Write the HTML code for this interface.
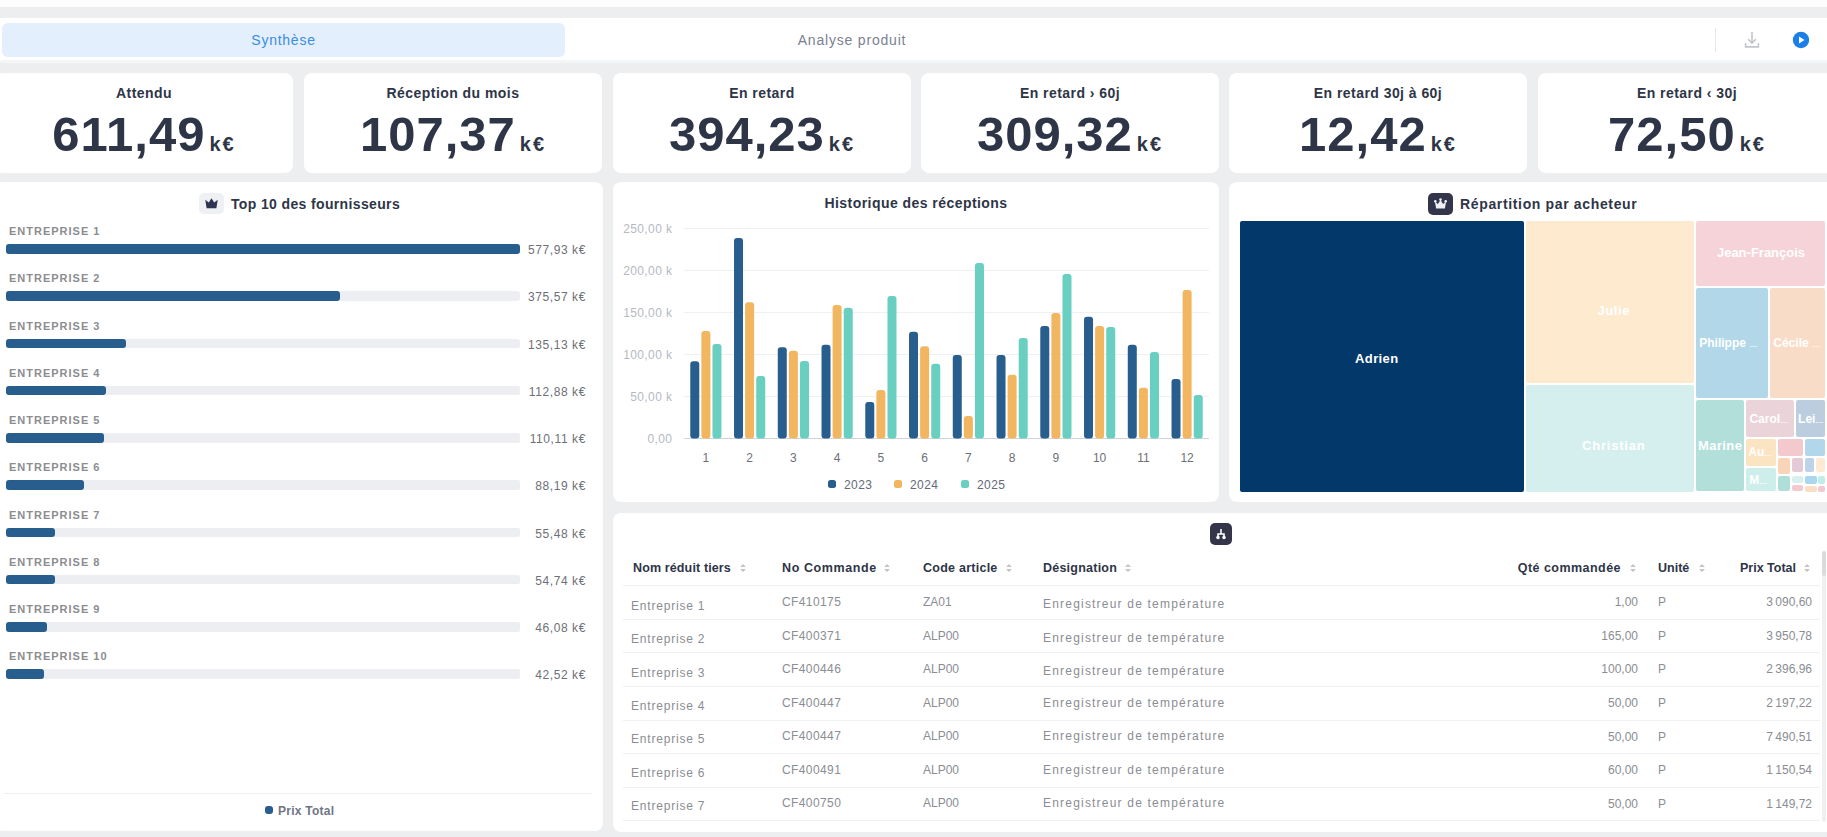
<!DOCTYPE html><html><head><meta charset="utf-8"><style>
*{box-sizing:border-box;margin:0;padding:0}
html,body{width:1827px;height:837px;overflow:hidden;background:#edeef0;font-family:"Liberation Sans", sans-serif;}
.a{position:absolute}
.card{position:absolute;background:#fff;border-radius:8px}
.t{position:absolute;white-space:nowrap;line-height:1}
.kl{font-size:14px;font-weight:bold;color:#2e3547;letter-spacing:0.45px}
.kv{font-size:49px;font-weight:bold;color:#2e3547;letter-spacing:1px}
.ku{font-size:20px;letter-spacing:2px;margin-left:4px}
.el{font-size:11px;font-weight:bold;color:#8c8d90;letter-spacing:1px}
.ev{font-size:12px;color:#6d7076;text-align:right;width:100px;letter-spacing:0.6px}
.yl{font-size:12px;color:#b5b9bf;text-align:right;width:60.4px;letter-spacing:0.4px}
.ml{font-size:12px;color:#6c7079;text-align:center;width:30px}
.lg{font-size:12px;color:#636a7a;letter-spacing:0.4px}
.tm{position:absolute;border-radius:3px}
.tl{position:absolute;white-space:nowrap;line-height:1;color:#fff;font-weight:bold;font-size:13px;text-align:center;letter-spacing:0.4px}
.th{font-size:12.5px;font-weight:bold;color:#2e3547}
.td{font-size:12px;color:#8a8d92}
.row{position:absolute;height:1px;background:#eef0f2}
</style></head><body>
<div class="a" style="left:0;top:0;width:1827px;height:7px;background:#fdfdfd"></div><div class="a" style="left:0;top:18px;width:1827px;height:45px;background:#fff"></div><div class="a" style="left:0;top:60px;width:1827px;height:2.5px;background:#f4f5f7"></div><div class="a" style="left:2px;top:23px;width:563px;height:33.5px;background:#e3effc;border-radius:6px"></div><div class="t" style="left:0;width:567px;text-align:center;top:33px;font-size:14px;letter-spacing:0.75px;color:#3a8de0">Synthèse</div><div class="t" style="left:567px;width:570px;text-align:center;top:33px;font-size:14px;letter-spacing:0.8px;color:#7b8190">Analyse produit</div><div class="a" style="left:1715px;top:28px;width:1px;height:24px;background:#e6e8ec"></div><svg class="a" style="left:1743px;top:31px" width="18" height="18" viewBox="0 0 18 18"><path d="M9 1v11M5.2 8.2l3.8 3.8 3.8-3.8" stroke="#c2c5cb" stroke-width="1.6" fill="none"/><path d="M2.6 12v3.9h12.8v-3.9" stroke="#c2c5cb" stroke-width="1.6" fill="none"/></svg><svg class="a" style="left:1792px;top:31px" width="18" height="18" viewBox="0 0 18 18"><circle cx="9" cy="9" r="8.2" fill="#1a7fe6"/><path d="M7 5.5v7l5.5-3.5z" fill="#fff"/></svg><div class="card" style="left:-5px;top:73px;width:298px;height:100px"></div><div class="t kl" style="left:-5px;width:298px;text-align:center;top:86px">Attendu</div><div class="t kv" style="left:-5px;width:298px;text-align:center;top:110px">611,49<span class="ku">k€</span></div><div class="card" style="left:304px;top:73px;width:298px;height:100px"></div><div class="t kl" style="left:304px;width:298px;text-align:center;top:86px">Réception du mois</div><div class="t kv" style="left:304px;width:298px;text-align:center;top:110px">107,37<span class="ku">k€</span></div><div class="card" style="left:613px;top:73px;width:298px;height:100px"></div><div class="t kl" style="left:613px;width:298px;text-align:center;top:86px">En retard</div><div class="t kv" style="left:613px;width:298px;text-align:center;top:110px">394,23<span class="ku">k€</span></div><div class="card" style="left:921px;top:73px;width:298px;height:100px"></div><div class="t kl" style="left:921px;width:298px;text-align:center;top:86px">En retard › 60j</div><div class="t kv" style="left:921px;width:298px;text-align:center;top:110px">309,32<span class="ku">k€</span></div><div class="card" style="left:1229px;top:73px;width:298px;height:100px"></div><div class="t kl" style="left:1229px;width:298px;text-align:center;top:86px">En retard 30j à 60j</div><div class="t kv" style="left:1229px;width:298px;text-align:center;top:110px">12,42<span class="ku">k€</span></div><div class="card" style="left:1538px;top:73px;width:298px;height:100px"></div><div class="t kl" style="left:1538px;width:298px;text-align:center;top:86px">En retard ‹ 30j</div><div class="t kv" style="left:1538px;width:298px;text-align:center;top:110px">72,50<span class="ku">k€</span></div><div class="card" style="left:-5px;top:182px;width:608px;height:649px"></div><div class="card" style="left:613px;top:182px;width:606px;height:320px"></div><div class="card" style="left:1229px;top:182px;width:607px;height:320px"></div><div class="card" style="left:613px;top:513px;width:1223px;height:319px"></div><div class="a" style="left:199px;top:193px;width:25px;height:21px;background:#eef0f4;border-radius:5px"></div><svg class="a" style="left:205px;top:198px" width="13" height="11" viewBox="0 0 13 11" fill="#2d3350"><path d="M0.3 1.8L3.8 4.4 6.5 0.3 9.2 4.4 12.7 1.8 11.4 10.3H1.6z"/></svg><div class="t" style="left:231px;top:197px;font-size:14px;letter-spacing:0.36px;font-weight:bold;color:#2e3547">Top 10 des fournisseurs</div><div class="t el" style="left:9px;top:226.00px">ENTREPRISE 1</div><div class="a" style="left:6px;top:244.00px;width:514px;height:9.5px;background:#eceef1;border-radius:2px"></div><div class="a" style="left:6px;top:244.00px;width:514px;height:9.5px;background:#275e8e;border-radius:3px"></div><div class="t ev" style="left:486px;top:244.00px">577,93 k€</div><div class="t el" style="left:9px;top:273.25px">ENTREPRISE 2</div><div class="a" style="left:6px;top:291.25px;width:514px;height:9.5px;background:#eceef1;border-radius:2px"></div><div class="a" style="left:6px;top:291.25px;width:334px;height:9.5px;background:#275e8e;border-radius:3px"></div><div class="t ev" style="left:486px;top:291.25px">375,57 k€</div><div class="t el" style="left:9px;top:320.50px">ENTREPRISE 3</div><div class="a" style="left:6px;top:338.50px;width:514px;height:9.5px;background:#eceef1;border-radius:2px"></div><div class="a" style="left:6px;top:338.50px;width:120px;height:9.5px;background:#275e8e;border-radius:3px"></div><div class="t ev" style="left:486px;top:338.50px">135,13 k€</div><div class="t el" style="left:9px;top:367.75px">ENTREPRISE 4</div><div class="a" style="left:6px;top:385.75px;width:514px;height:9.5px;background:#eceef1;border-radius:2px"></div><div class="a" style="left:6px;top:385.75px;width:100px;height:9.5px;background:#275e8e;border-radius:3px"></div><div class="t ev" style="left:486px;top:385.75px">112,88 k€</div><div class="t el" style="left:9px;top:415.00px">ENTREPRISE 5</div><div class="a" style="left:6px;top:433.00px;width:514px;height:9.5px;background:#eceef1;border-radius:2px"></div><div class="a" style="left:6px;top:433.00px;width:98px;height:9.5px;background:#275e8e;border-radius:3px"></div><div class="t ev" style="left:486px;top:433.00px">110,11 k€</div><div class="t el" style="left:9px;top:462.25px">ENTREPRISE 6</div><div class="a" style="left:6px;top:480.25px;width:514px;height:9.5px;background:#eceef1;border-radius:2px"></div><div class="a" style="left:6px;top:480.25px;width:78px;height:9.5px;background:#275e8e;border-radius:3px"></div><div class="t ev" style="left:486px;top:480.25px">88,19 k€</div><div class="t el" style="left:9px;top:509.50px">ENTREPRISE 7</div><div class="a" style="left:6px;top:527.50px;width:514px;height:9.5px;background:#eceef1;border-radius:2px"></div><div class="a" style="left:6px;top:527.50px;width:49px;height:9.5px;background:#275e8e;border-radius:3px"></div><div class="t ev" style="left:486px;top:527.50px">55,48 k€</div><div class="t el" style="left:9px;top:556.75px">ENTREPRISE 8</div><div class="a" style="left:6px;top:574.75px;width:514px;height:9.5px;background:#eceef1;border-radius:2px"></div><div class="a" style="left:6px;top:574.75px;width:49px;height:9.5px;background:#275e8e;border-radius:3px"></div><div class="t ev" style="left:486px;top:574.75px">54,74 k€</div><div class="t el" style="left:9px;top:604.00px">ENTREPRISE 9</div><div class="a" style="left:6px;top:622.00px;width:514px;height:9.5px;background:#eceef1;border-radius:2px"></div><div class="a" style="left:6px;top:622.00px;width:41px;height:9.5px;background:#275e8e;border-radius:3px"></div><div class="t ev" style="left:486px;top:622.00px">46,08 k€</div><div class="t el" style="left:9px;top:651.25px">ENTREPRISE 10</div><div class="a" style="left:6px;top:669.25px;width:514px;height:9.5px;background:#eceef1;border-radius:2px"></div><div class="a" style="left:6px;top:669.25px;width:38px;height:9.5px;background:#275e8e;border-radius:3px"></div><div class="t ev" style="left:486px;top:669.25px">42,52 k€</div><div class="a" style="left:4px;top:793px;width:588px;height:1px;background:#eceef1"></div><div class="a" style="left:265px;top:806px;width:8px;height:8px;background:#275e8e;border-radius:3px"></div><div class="t" style="left:278px;top:805px;font-size:12px;letter-spacing:0.25px;font-weight:bold;color:#6e7585">Prix Total</div><div class="t" style="left:613px;width:606px;text-align:center;top:196px;font-size:14px;letter-spacing:0.45px;font-weight:bold;color:#2e3547">Historique des réceptions</div><div class="a" style="left:684px;top:228.00px;width:525px;height:1px;background:#eef0f2"></div><div class="t yl" style="left:612px;top:223.00px">250,00 k</div><div class="a" style="left:684px;top:270.02px;width:525px;height:1px;background:#eef0f2"></div><div class="t yl" style="left:612px;top:265.02px">200,00 k</div><div class="a" style="left:684px;top:312.04px;width:525px;height:1px;background:#eef0f2"></div><div class="t yl" style="left:612px;top:307.04px">150,00 k</div><div class="a" style="left:684px;top:354.06px;width:525px;height:1px;background:#eef0f2"></div><div class="t yl" style="left:612px;top:349.06px">100,00 k</div><div class="a" style="left:684px;top:396.08px;width:525px;height:1px;background:#eef0f2"></div><div class="t yl" style="left:612px;top:391.08px">50,00 k</div><div class="a" style="left:684px;top:438.10px;width:525px;height:1px;background:#cfd2d6"></div><div class="t yl" style="left:612px;top:433.10px">0,00</div><div class="t ml" style="left:690.88px;top:452px">1</div><div class="t ml" style="left:734.62px;top:452px">2</div><div class="t ml" style="left:778.38px;top:452px">3</div><div class="t ml" style="left:822.12px;top:452px">4</div><div class="t ml" style="left:865.88px;top:452px">5</div><div class="t ml" style="left:909.62px;top:452px">6</div><div class="t ml" style="left:953.38px;top:452px">7</div><div class="t ml" style="left:997.12px;top:452px">8</div><div class="t ml" style="left:1040.88px;top:452px">9</div><div class="t ml" style="left:1084.62px;top:452px">10</div><div class="t ml" style="left:1128.38px;top:452px">11</div><div class="t ml" style="left:1172.12px;top:452px">12</div><svg class="a" style="left:0;top:0" width="1827" height="837"><rect x="690.27" y="361.37" width="9" height="77.23" rx="3" fill="#275e8e"/><rect x="701.38" y="331.03" width="9" height="107.57" rx="3" fill="#f2b660"/><rect x="712.48" y="343.97" width="9" height="94.63" rx="3" fill="#68cfc1"/><rect x="734.02" y="238.00" width="9" height="200.60" rx="3" fill="#275e8e"/><rect x="745.12" y="302.20" width="9" height="136.40" rx="3" fill="#f2b660"/><rect x="756.23" y="375.91" width="9" height="62.69" rx="3" fill="#68cfc1"/><rect x="777.77" y="347.16" width="9" height="91.44" rx="3" fill="#275e8e"/><rect x="788.88" y="350.69" width="9" height="87.91" rx="3" fill="#f2b660"/><rect x="799.98" y="361.03" width="9" height="77.57" rx="3" fill="#68cfc1"/><rect x="821.52" y="344.81" width="9" height="93.79" rx="3" fill="#275e8e"/><rect x="832.62" y="304.98" width="9" height="133.62" rx="3" fill="#f2b660"/><rect x="843.73" y="307.75" width="9" height="130.85" rx="3" fill="#68cfc1"/><rect x="865.27" y="402.04" width="9" height="36.56" rx="3" fill="#275e8e"/><rect x="876.38" y="390.02" width="9" height="48.58" rx="3" fill="#f2b660"/><rect x="887.48" y="295.90" width="9" height="142.70" rx="3" fill="#68cfc1"/><rect x="909.02" y="331.87" width="9" height="106.73" rx="3" fill="#275e8e"/><rect x="920.12" y="346.16" width="9" height="92.44" rx="3" fill="#f2b660"/><rect x="931.23" y="363.80" width="9" height="74.80" rx="3" fill="#68cfc1"/><rect x="952.77" y="354.98" width="9" height="83.62" rx="3" fill="#275e8e"/><rect x="963.88" y="415.91" width="9" height="22.69" rx="3" fill="#f2b660"/><rect x="974.98" y="262.96" width="9" height="175.64" rx="3" fill="#68cfc1"/><rect x="996.52" y="354.98" width="9" height="83.62" rx="3" fill="#275e8e"/><rect x="1007.62" y="374.73" width="9" height="63.87" rx="3" fill="#f2b660"/><rect x="1018.73" y="338.00" width="9" height="100.60" rx="3" fill="#68cfc1"/><rect x="1040.28" y="325.99" width="9" height="112.61" rx="3" fill="#275e8e"/><rect x="1051.38" y="312.96" width="9" height="125.64" rx="3" fill="#f2b660"/><rect x="1062.48" y="273.88" width="9" height="164.72" rx="3" fill="#68cfc1"/><rect x="1084.03" y="316.74" width="9" height="121.86" rx="3" fill="#275e8e"/><rect x="1095.12" y="325.99" width="9" height="112.61" rx="3" fill="#f2b660"/><rect x="1106.23" y="326.99" width="9" height="111.61" rx="3" fill="#68cfc1"/><rect x="1127.78" y="344.81" width="9" height="93.79" rx="3" fill="#275e8e"/><rect x="1138.88" y="387.84" width="9" height="50.76" rx="3" fill="#f2b660"/><rect x="1149.98" y="352.04" width="9" height="86.56" rx="3" fill="#68cfc1"/><rect x="1171.53" y="379.10" width="9" height="59.50" rx="3" fill="#275e8e"/><rect x="1182.62" y="290.02" width="9" height="148.58" rx="3" fill="#f2b660"/><rect x="1193.73" y="394.90" width="9" height="43.70" rx="3" fill="#68cfc1"/></svg><div class="a" style="left:828px;top:480px;width:8px;height:8px;background:#275e8e;border-radius:2.5px"></div><div class="t lg" style="left:844px;top:479px">2023</div><div class="a" style="left:894px;top:480px;width:8px;height:8px;background:#f2b660;border-radius:2.5px"></div><div class="t lg" style="left:910px;top:479px">2024</div><div class="a" style="left:961px;top:480px;width:8px;height:8px;background:#68cfc1;border-radius:2.5px"></div><div class="t lg" style="left:977px;top:479px">2025</div><div class="a" style="left:1428px;top:193px;width:25px;height:22px;background:#33354a;border-radius:5px"></div><svg class="a" style="left:1434px;top:198px" width="13" height="11" viewBox="0 0 13 11" fill="#eef0f6"><path d="M0.9 3.6L3.9 5.9 6.5 2 9.1 5.9 12.1 3.6 10.9 10.6H2.1z"/><circle cx="1.3" cy="3.2" r="1.3"/><circle cx="6.5" cy="1.6" r="1.3"/><circle cx="11.7" cy="3.2" r="1.3"/></svg><div class="t" style="left:1460px;top:197px;font-size:14px;letter-spacing:0.65px;font-weight:bold;color:#2e3547">Répartition par acheteur</div><div class="tm" style="left:1240px;top:220.6px;width:284.0px;height:271.2px;background:#03386a;border-radius:2px"></div><div class="tl" style="left:1316.8px;width:120px;top:352.0px;letter-spacing:0.4px">Adrien</div><div class="tm" style="left:1526.3px;top:220.6px;width:167.5px;height:162.4px;background:#fdeacf;border-radius:2px"></div><div class="tl" style="left:1553.7px;width:120px;top:303.5px;letter-spacing:0.6px">Julie</div><div class="tm" style="left:1526.3px;top:385px;width:167.5px;height:106.8px;background:#d4efed;border-radius:2px"></div><div class="tl" style="left:1553.8px;width:120px;top:438.8px;letter-spacing:0.8px">Christian</div><div class="tm" style="left:1696.2px;top:220.6px;width:128.8px;height:65.4px;background:#f5d3d8;border-radius:2px"></div><div class="tl" style="left:1701.0px;width:120px;top:246.0px;letter-spacing:0px">Jean-François</div><div class="tm" style="left:1696px;top:288px;width:72.0px;height:110.0px;background:#b2d7e9;border-radius:2px"></div><div class="tl" style="left:1668.0px;width:120px;top:336.8px;font-size:12px;letter-spacing:0">Philippe <span style="font-size:8px;letter-spacing:-0.5px">…</span></div><div class="tm" style="left:1770px;top:288px;width:55.0px;height:110.0px;background:#f9dcc7;border-radius:2px"></div><div class="tl" style="left:1736.4px;width:120px;top:336.8px;font-size:12px;letter-spacing:0">Cécile <span style="font-size:8px;letter-spacing:-0.5px">…</span></div><div class="tm" style="left:1696px;top:400.3px;width:48.0px;height:91.2px;background:#b3dfdb;border-radius:2px"></div><div class="tl" style="left:1660.2px;width:120px;top:438.8px;letter-spacing:0.4px">Marine</div><div class="tm" style="left:1746px;top:400.3px;width:48.0px;height:36.3px;background:#ebd3da;border-radius:2px"></div><div class="tl" style="left:1708.5px;width:120px;top:412.5px;font-size:12px;letter-spacing:0">Carol<span style="font-size:8px;letter-spacing:-0.5px">…</span></div><div class="tm" style="left:1796px;top:400.3px;width:29.0px;height:36.3px;background:#bccde0;border-radius:2px"></div><div class="tl" style="left:1750.5px;width:120px;top:412.5px;font-size:12px;letter-spacing:0">Lei<span style="font-size:8px;letter-spacing:-0.5px">…</span></div><div class="tm" style="left:1746px;top:438.8px;width:30.0px;height:26.9px;background:#fbe4c2;border-radius:2px"></div><div class="tl" style="left:1700.0px;width:120px;top:446.0px;font-size:12px;letter-spacing:0">Au<span style="font-size:8px;letter-spacing:-0.5px">…</span></div><div class="tm" style="left:1746px;top:467.7px;width:30.0px;height:23.8px;background:#cdeeea;border-radius:2px"></div><div class="tl" style="left:1698.0px;width:120px;top:473.6px;font-size:12px;letter-spacing:0">M<span style="font-size:8px;letter-spacing:-0.5px">…</span></div><div class="tm" style="left:1778px;top:438.8px;width:25.0px;height:17.2px;background:#f3c9cd;border-radius:2px"></div><div class="tm" style="left:1805px;top:438.8px;width:20.0px;height:17.2px;background:#b2d7ea;border-radius:2px"></div><div class="tm" style="left:1778px;top:457.8px;width:12.0px;height:16.1px;background:#f8d5b9;border-radius:2px"></div><div class="tm" style="left:1792px;top:457.8px;width:11.0px;height:13.9px;background:#e5c9d5;border-radius:2px"></div><div class="tm" style="left:1805px;top:457.8px;width:9.0px;height:13.9px;background:#bcd3e9;border-radius:2px"></div><div class="tm" style="left:1816px;top:457.8px;width:9.0px;height:13.9px;background:#fcead2;border-radius:2px"></div><div class="tm" style="left:1778px;top:475.7px;width:12.0px;height:15.8px;background:#b0dfd9;border-radius:2px"></div><div class="tm" style="left:1792px;top:475.7px;width:11.0px;height:7.5px;background:#d7f0ef;border-radius:2px"></div><div class="tm" style="left:1792px;top:484.6px;width:11.0px;height:6.9px;background:#f4c8d0;border-radius:2px"></div><div class="tm" style="left:1805px;top:475.7px;width:12.0px;height:8.2px;background:#aad7f0;border-radius:2px"></div><div class="tm" style="left:1818px;top:475.7px;width:7.0px;height:8.2px;background:#bfeee8;border-radius:2px"></div><div class="tm" style="left:1805px;top:486px;width:12.0px;height:5.5px;background:#fbdfc4;border-radius:2px"></div><div class="tm" style="left:1818px;top:486px;width:7.0px;height:5.5px;background:#f4c8d0;border-radius:2px"></div><div class="a" style="left:1210px;top:523px;width:22px;height:22px;background:#343549;border-radius:5px"></div><svg class="a" style="left:1215px;top:528px" width="12" height="12" viewBox="0 0 12 12" fill="none" stroke="#fff" stroke-width="1.6"><path d="M6 1v5M3 9V6h6v3"/><circle cx="3" cy="9.5" r="1" fill="#fff"/><circle cx="9" cy="9.5" r="1" fill="#fff"/></svg><div class="t th" style="left:633px;top:562px;letter-spacing:0.13px">Nom réduit tiers</div><svg class="a" style="left:740px;top:564px" width="6" height="8" viewBox="0 0 6 8" fill="#c4c4c4"><path d="M3 0L6 3H0z M3 8L0 5h6z"/></svg><div class="t th" style="left:782px;top:562px;letter-spacing:0.6px">No Commande</div><svg class="a" style="left:884px;top:564px" width="6" height="8" viewBox="0 0 6 8" fill="#c4c4c4"><path d="M3 0L6 3H0z M3 8L0 5h6z"/></svg><div class="t th" style="left:923px;top:562px;letter-spacing:0.25px">Code article</div><svg class="a" style="left:1006px;top:564px" width="6" height="8" viewBox="0 0 6 8" fill="#c4c4c4"><path d="M3 0L6 3H0z M3 8L0 5h6z"/></svg><div class="t th" style="left:1043px;top:562px;letter-spacing:0.23px">Désignation</div><svg class="a" style="left:1125px;top:564px" width="6" height="8" viewBox="0 0 6 8" fill="#c4c4c4"><path d="M3 0L6 3H0z M3 8L0 5h6z"/></svg><div class="t th" style="left:1421px;width:200px;text-align:right;top:562px;letter-spacing:0.46px">Qté commandée</div><svg class="a" style="left:1630px;top:564px" width="6" height="8" viewBox="0 0 6 8" fill="#c4c4c4"><path d="M3 0L6 3H0z M3 8L0 5h6z"/></svg><div class="t th" style="left:1658px;top:562px">Unité</div><svg class="a" style="left:1699px;top:564px" width="6" height="8" viewBox="0 0 6 8" fill="#c4c4c4"><path d="M3 0L6 3H0z M3 8L0 5h6z"/></svg><div class="t th" style="left:1740px;top:562px">Prix Total</div><svg class="a" style="left:1804px;top:564px" width="6" height="8" viewBox="0 0 6 8" fill="#c4c4c4"><path d="M3 0L6 3H0z M3 8L0 5h6z"/></svg><div class="row" style="left:623px;top:585px;width:1197px"></div><div class="t td" style="left:631px;top:599.9px;letter-spacing:0.8px">Entreprise 1</div><div class="t td" style="left:782px;top:596.4px;letter-spacing:0.4px">CF410175</div><div class="t td" style="left:923px;top:596.4px">ZA01</div><div class="t td" style="left:1043px;top:598.1px;letter-spacing:1.2px">Enregistreur de température</div><div class="t td" style="left:1538px;width:100px;text-align:right;top:596.2px">1,00</div><div class="t td" style="left:1658px;top:596.2px">P</div><div class="t td" style="left:1712px;width:100px;text-align:right;top:596.2px">3 090,60</div><div class="row" style="left:623px;top:618.8px;width:1197px"></div><div class="t td" style="left:631px;top:633.2px;letter-spacing:0.8px">Entreprise 2</div><div class="t td" style="left:782px;top:629.9px;letter-spacing:0.4px">CF400371</div><div class="t td" style="left:923px;top:629.9px">ALP00</div><div class="t td" style="left:1043px;top:631.6px;letter-spacing:1.2px">Enregistreur de température</div><div class="t td" style="left:1538px;width:100px;text-align:right;top:629.8px">165,00</div><div class="t td" style="left:1658px;top:629.8px">P</div><div class="t td" style="left:1712px;width:100px;text-align:right;top:629.8px">3 950,78</div><div class="row" style="left:623px;top:652.4px;width:1197px"></div><div class="t td" style="left:631px;top:666.6px;letter-spacing:0.8px">Entreprise 3</div><div class="t td" style="left:782px;top:663.3px;letter-spacing:0.4px">CF400446</div><div class="t td" style="left:923px;top:663.3px">ALP00</div><div class="t td" style="left:1043px;top:665.0px;letter-spacing:1.2px">Enregistreur de température</div><div class="t td" style="left:1538px;width:100px;text-align:right;top:663.4px">100,00</div><div class="t td" style="left:1658px;top:663.4px">P</div><div class="t td" style="left:1712px;width:100px;text-align:right;top:663.4px">2 396,96</div><div class="row" style="left:623px;top:686.0px;width:1197px"></div><div class="t td" style="left:631px;top:700.0px;letter-spacing:0.8px">Entreprise 4</div><div class="t td" style="left:782px;top:696.8px;letter-spacing:0.4px">CF400447</div><div class="t td" style="left:923px;top:696.8px">ALP00</div><div class="t td" style="left:1043px;top:696.8px;letter-spacing:1.2px">Enregistreur de température</div><div class="t td" style="left:1538px;width:100px;text-align:right;top:697.0px">50,00</div><div class="t td" style="left:1658px;top:697.0px">P</div><div class="t td" style="left:1712px;width:100px;text-align:right;top:697.0px">2 197,22</div><div class="row" style="left:623px;top:719.6px;width:1197px"></div><div class="t td" style="left:631px;top:733.3px;letter-spacing:0.8px">Entreprise 5</div><div class="t td" style="left:782px;top:730.2px;letter-spacing:0.4px">CF400447</div><div class="t td" style="left:923px;top:730.2px">ALP00</div><div class="t td" style="left:1043px;top:730.2px;letter-spacing:1.2px">Enregistreur de température</div><div class="t td" style="left:1538px;width:100px;text-align:right;top:730.6px">50,00</div><div class="t td" style="left:1658px;top:730.6px">P</div><div class="t td" style="left:1712px;width:100px;text-align:right;top:730.6px">7 490,51</div><div class="row" style="left:623px;top:753.2px;width:1197px"></div><div class="t td" style="left:631px;top:766.6px;letter-spacing:0.8px">Entreprise 6</div><div class="t td" style="left:782px;top:763.6px;letter-spacing:0.4px">CF400491</div><div class="t td" style="left:923px;top:763.6px">ALP00</div><div class="t td" style="left:1043px;top:763.6px;letter-spacing:1.2px">Enregistreur de température</div><div class="t td" style="left:1538px;width:100px;text-align:right;top:764.2px">60,00</div><div class="t td" style="left:1658px;top:764.2px">P</div><div class="t td" style="left:1712px;width:100px;text-align:right;top:764.2px">1 150,54</div><div class="row" style="left:623px;top:786.8px;width:1197px"></div><div class="t td" style="left:631px;top:800.0px;letter-spacing:0.8px">Entreprise 7</div><div class="t td" style="left:782px;top:797.1px;letter-spacing:0.4px">CF400750</div><div class="t td" style="left:923px;top:797.1px">ALP00</div><div class="t td" style="left:1043px;top:797.1px;letter-spacing:1.2px">Enregistreur de température</div><div class="t td" style="left:1538px;width:100px;text-align:right;top:797.8px">50,00</div><div class="t td" style="left:1658px;top:797.8px">P</div><div class="t td" style="left:1712px;width:100px;text-align:right;top:797.8px">1 149,72</div><div class="row" style="left:623px;top:820.4px;width:1197px"></div><div class="a" style="left:1822px;top:551px;width:4px;height:271px;background:#eef0f2;border-radius:2px"></div><div class="a" style="left:1822px;top:551px;width:4px;height:25px;background:#d9dbdf;border-radius:2px"></div>
</body></html>
